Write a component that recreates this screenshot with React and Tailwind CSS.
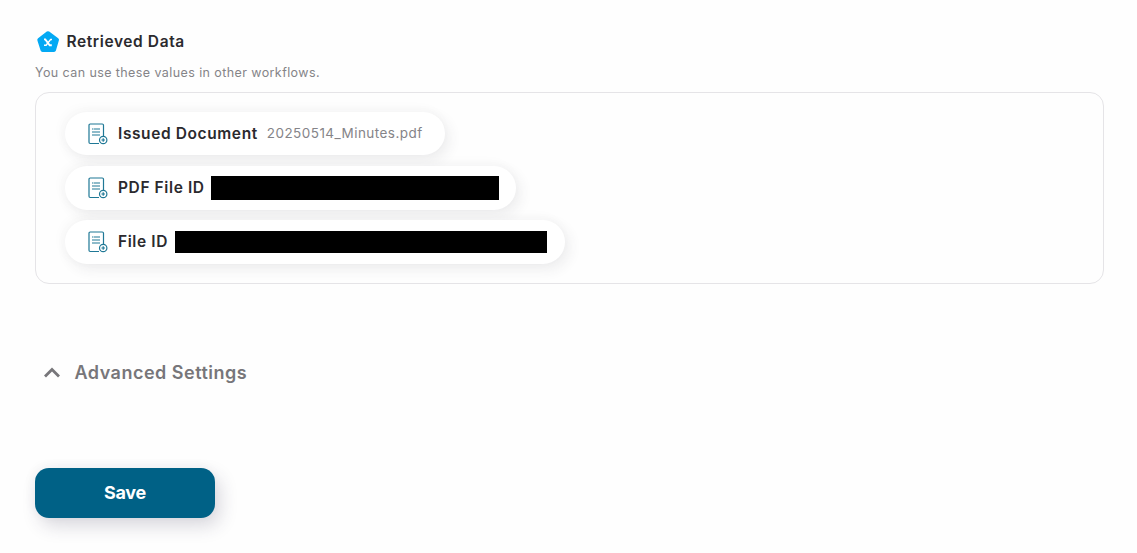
import React, { useState } from "react";

const values = [
  { label: "Issued Document", value: "20250514_Minutes.pdf" },
  { label: "PDF File ID", bar: "ml-[6.3px] mt-px h-6 w-[288px]", pill: "pr-[17px]" },
  { label: "File ID", bar: "ml-[7px] h-[22px] w-[372px]", pill: "pr-[18px]" },
];

const PentagonIcon = () => (
  <svg width="24" height="24" viewBox="0 0 24 24" fill="none">
    <path
      d="M12 4.2 21 10.8 18 21H6.5L3.3 10.8Z"
      fill="#03a9f4"
      stroke="#03a9f4"
      strokeWidth="4"
      strokeLinejoin="round"
    />
    <path d="M8 10.4h1.3l4.4 5.9h2.1" stroke="#fff" strokeWidth="1.9" />
    <path d="M16 10.4h-1.3l-4.6 5.9H8" stroke="#fff" strokeWidth="1.5" />
  </svg>
);

const DocumentIcon = () => (
  <svg width="20" height="22" viewBox="0 0 20 22" fill="none" stroke="#1f7896">
    <path
      d="M11 20.5H2.2A1.2 1.2 0 0 1 1 19.3V2.2A1.2 1.2 0 0 1 2.2 1h12.1a1.2 1.2 0 0 1 1.200 1.2V13"
      strokeWidth="1.2"
    />
    <path d="M4 6h1.5M6 6h6M4 9h8M4 12h8" strokeWidth="1.2" />
    <circle cx="15.2" cy="17" r="3.7" fill="#fff" strokeWidth="1.2" />
    <path d="M15.2 15.2v3.6M13.4 17H17" strokeWidth="1.2" />
  </svg>
);

const App = () => {
  const [open, setOpen] = useState(false);

  return (
    <div className="min-h-screen bg-[#fefefe] pl-[35px] pr-[33px] pt-[29px] font-['Inter',sans-serif] text-[#2b2a2e]">
      <div className="flex h-6 items-center gap-[6.5px] pl-px">
        <PentagonIcon />
        <h2 className="pt-px text-[15.5px] font-semibold tracking-[0.6px]">
          Retrieved Data
        </h2>
      </div>
      <p className="mt-[10px] text-[12.5px] leading-5 tracking-[0.41px] text-[#858488]">
        You can use these values in other workflows.
      </p>

      <div className="mt-[9px] flex h-48 flex-col items-start gap-[10.5px] rounded-[14px] border border-[#e5e4e7] pl-[29px] pt-[18.5px]">
        {values.map((item) => (
          <div
            key={item.label}
            className={`flex h-[43.8px] items-center rounded-full bg-white pl-[23px] shadow-[4px_5px_14px_rgba(60,50,70,0.09),-3px_-3px_12px_rgba(60,50,70,0.03)] ${item.pill || "pr-[22px]"}`}
          >
            <div className="pt-px">
              <DocumentIcon />
            </div>
            <span className="ml-[10px] whitespace-nowrap text-[15.5px] font-semibold tracking-[0.6px]">
              {item.label}
            </span>
            {item.value ? (
              <span className="ml-[9px] whitespace-nowrap text-[13.5px] tracking-[0.45px] text-[#858488]">
                {item.value}
              </span>
            ) : (
              <span className={`bg-black ${item.bar}`} />
            )}
          </div>
        ))}
      </div>

      <button
        onClick={() => setOpen(!open)}
        className="mt-[74px] flex h-7 items-center pl-2 text-[#77767a]"
      >
        <svg width="18" height="12" viewBox="0 0 18 12" fill="none">
          <path d="m2 10.5 7-7 7 7" stroke="currentColor" strokeWidth="2.8" />
        </svg>
        <span className="ml-[13.5px] text-[18px] font-semibold tracking-[0.5px]">
          Advanced Settings
        </span>
      </button>

      <button className="mt-[82px] h-[50px] w-[180px] rounded-[14px] bg-[#006186] pb-[2px] text-[18px] font-bold tracking-[-0.25px] text-white shadow-[5px_8px_18px_rgba(50,45,80,0.18),-2px_-2px_12px_rgba(50,45,80,0.04)]">
        Save
      </button>
    </div>
  );
};

export default App;
